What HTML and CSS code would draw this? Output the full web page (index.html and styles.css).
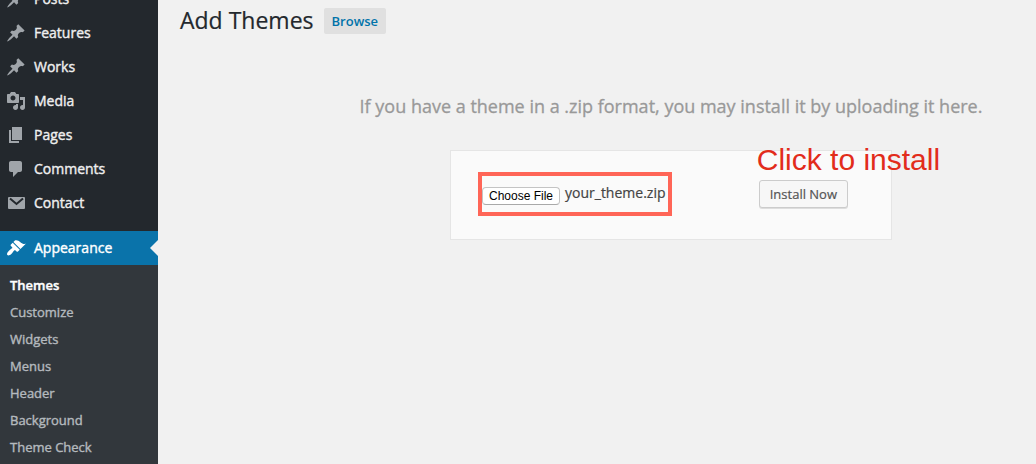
FILE: index.html
```html
<!DOCTYPE html>
<html lang="en">
<head>
<meta charset="utf-8">
<title>Add Themes</title>
<link rel="stylesheet" href="styles.css">
</head>
<body>
<svg class="sprite" aria-hidden="true">
  <symbol id="pin" viewBox="0 0 20 20"><path d="M10.44 3.02l1.82-1.82 6.36 6.35-1.83 1.82c-1.05-.68-2.48-.57-3.41.36l-.75.75c-.92.93-1.04 2.35-.35 3.41l-1.83 1.82-2.41-2.41-2.8 2.79c-.42.42-3.38 2.71-3.8 2.29s1.86-3.39 2.28-3.81l2.79-2.79L4.1 9.36l1.83-1.82c1.05.69 2.48.57 3.4-.36l.75-.75c.93-.92 1.05-2.35.36-3.41z"/></symbol>
</svg>
<div class="layout">
  <nav class="sidebar" aria-label="Main menu">
    <ul class="menu">
      <li><a class="menu-link" href="#"><svg class="icon"><use href="#pin"/></svg><span class="menu-label">Posts</span></a></li>
      <li><a class="menu-link" href="#"><svg class="icon"><use href="#pin"/></svg><span class="menu-label">Features</span></a></li>
      <li><a class="menu-link" href="#"><svg class="icon"><use href="#pin"/></svg><span class="menu-label">Works</span></a></li>
      <li><a class="menu-link" href="#"><svg class="icon" viewBox="0 0 20 20"><path d="M13 11V4c0-.55-.45-1-1-1h-1.67L9 1H5L3.67 3H2c-.55 0-1 .45-1 1v7c0 .55.45 1 1 1h10c.55 0 1-.45 1-1zM7 4.5c1.38 0 2.5 1.12 2.5 2.5S8.380 9.500 7 9.500 4.500 8.380 4.500 7 5.620 4.500 7 4.500zM14 6h5v10.500c0 1.380-1.120 2.500-2.500 2.500S14 17.880 14 16.500s1.120-2.500 2.500-2.500c.17 0 .34.020.5.050V9h-3V6zm-4 8.050V13h2v3.500c0 1.380-1.120 2.500-2.500 2.500S7 17.880 7 16.500 8.120 14 9.500 14c.17 0 .34.020.5.050z"/></svg><span class="menu-label">Media</span></a></li>
      <li><a class="menu-link" href="#"><svg class="icon" viewBox="0 0 20 20"><path d="M6 15V2h10v13H6zm-1 1h8v2H3V5h2v11z"/></svg><span class="menu-label">Pages</span></a></li>
      <li><a class="menu-link" href="#"><svg class="icon" viewBox="0 0 20 20"><path d="M5 2h9c1.100 0 2 .9 2 2v7c0 1.100-.9 2-2 2h-2l-5 5v-5H5c-1.100 0-2-.9-2-2V4c0-1.100.9-2 2-2z"/></svg><span class="menu-label">Comments</span></a></li>
      <li><a class="menu-link" href="#"><svg class="icon" viewBox="0 0 20 20"><rect x="2" y="4" width="17" height="12" rx="1"/><path class="envelope-fold" d="M4 5.500l6.500 5.500L17 5.500"/></svg><span class="menu-label">Contact</span></a></li>
      <li class="menu-current">
        <a class="menu-link menu-link-active" href="#"><svg class="icon" viewBox="0 0 20 20"><path d="M14.48 11.060L7.410 3.990l1.500-1.500c.5-.56 2.300-.47 3.510.32 1.210.8 1.430 1.280 2.910 2.100 1.180.64 2.450 1.260 4.450.85zm-.71.71L6.700 4.700 4.930 6.470c-.39.39-.39 1.020 0 1.410l1.060 1.060c.39.39.39 1.030 0 1.420-.6.6-1.430 1.110-2.210 1.690-.35.26-.7.53-1.010.84C1.430 14.230.4 16.080 1.400 17.070c.99 1 2.840-.03 4.180-1.360.31-.31.58-.66.85-1.020.57-.78 1.080-1.610 1.690-2.210.39-.39 1.020-.39 1.410 0l1.060 1.060c.39.39 1.020.39 1.410 0z"/></svg><span class="menu-label">Appearance</span></a>
        <ul class="submenu">
          <li><a class="submenu-link submenu-link-active" href="#">Themes</a></li>
          <li><a class="submenu-link" href="#">Customize</a></li>
          <li><a class="submenu-link" href="#">Widgets</a></li>
          <li><a class="submenu-link" href="#">Menus</a></li>
          <li><a class="submenu-link" href="#">Header</a></li>
          <li><a class="submenu-link" href="#">Background</a></li>
          <li><a class="submenu-link" href="#">Theme Check</a></li>
        </ul>
      </li>
    </ul>
  </nav>
  <main class="content">
    <header class="page-head">
      <h1 class="page-title">Add Themes</h1>
      <a class="browse" href="#">Browse</a>
    </header>
    <section class="upload">
      <p class="upload-help">If you have a theme in a .zip format, you may install it by uploading it here.</p>
      <form class="upload-form">
        <div class="file-field">
          <input class="file-input" id="theme-file" type="file" accept=".zip">
          <label class="file-name" for="theme-file">your_theme.zip</label>
        </div>
        <div class="install">
          <span class="install-note">Click to install</span>
          <button class="install-button" type="button">Install Now</button>
        </div>
      </form>
    </section>
  </main>
</div>
</body>
</html>
```
FILE: styles.css
```css
* {
  box-sizing: border-box;
}

body {
  margin: 0;
  background: #f1f1f1;
  color: #444;
  font-family: "Open Sans", sans-serif;
  font-size: 14px;
}

a {
  text-decoration: none;
}

ul {
  margin: 0;
  padding: 0;
  list-style: none;
}

.sprite {
  display: none;
}

.layout {
  display: flex;
  height: 100vh;
  overflow: hidden;
}

/* Sidebar, scrolled part of the way down */
.sidebar {
  flex: 0 0 158px;
  background: #23282d;
}

.menu {
  margin-top: -18px;
}

.menu-link {
  display: flex;
  align-items: center;
  gap: 8px;
  height: 34px;
  padding-left: 6px;
  color: #eee;
  -webkit-text-stroke: 0.4px;
}

.menu-label {
  padding-bottom: 2px;
}

.icon {
  flex: none;
  width: 20px;
  height: 20px;
  fill: #a0a5aa;
}

.envelope-fold {
  fill: none;
  stroke: #23282d;
  stroke-width: 2;
}

.menu-current {
  margin-top: 11px;
}

.menu-link-active {
  position: relative;
  background: #0a73aa;
  color: #fff;
}

.menu-link-active .icon {
  fill: #fff;
}

.menu-link-active::after {
  content: "";
  position: absolute;
  top: 9px;
  right: 0;
  border: 8px solid transparent;
  border-left-width: 0;
  border-right-color: #f1f1f1;
}

.submenu {
  padding: 7px 0;
  background: #32373c;
}

.submenu-link {
  display: block;
  padding-left: 10px;
  color: #b4b9be;
  font-size: 13px;
  line-height: 27px;
  -webkit-text-stroke: 0.4px;
}

.submenu-link-active {
  color: #fff;
  font-weight: 600;
}

/* Page */
.content {
  flex: 1;
  min-width: 0;
}

.page-head {
  display: flex;
  align-items: center;
  gap: 10px;
  height: 42px;
  padding-left: 22px;
}

.page-title {
  margin: 0;
  padding-bottom: 2px;
  color: #23282d;
  font-size: 23px;
  font-weight: 400;
  -webkit-text-stroke: 0.2px;
}

.browse {
  padding: 0 8px;
  border-radius: 2px;
  background: #e0e0e0;
  color: #0073aa;
  font-size: 13px;
  font-weight: 600;
  line-height: 26px;
}

.upload {
  display: flex;
  flex-direction: column;
  align-items: center;
  padding: 52px 0 0 148px;
}

.upload-help {
  margin: 0 0 32px;
  color: #999;
  font-size: 18px;
  line-height: 24px;
  white-space: nowrap;
  -webkit-text-stroke: 0.3px;
}

.upload-form {
  display: flex;
  align-items: center;
  justify-content: space-between;
  width: 442px;
  padding: 21px 43px 23px 27px;
  border: 1px solid #e5e5e5;
  background: #fafafa;
}

.file-field {
  display: flex;
  align-items: flex-start;
  gap: 5px;
  height: 44px;
  padding: 7px 3px 0 0;
  border: 4px solid #ff6557;
}

.file-input {
  width: 78px;
  margin-top: 4px;
  overflow: hidden;
  font-size: 12px;
}

.file-input::file-selector-button {
  width: 78px;
  height: 18px;
  margin: 0;
  padding: 0;
  border: 1px solid #c4c4c4;
  border-bottom-color: #a9a9a9;
  border-radius: 4px;
  background: #fff;
  color: #000;
  font-family: "Liberation Sans", sans-serif;
  font-size: 12px;
}

.file-name {
  line-height: 20px;
  -webkit-text-stroke: 0.2px;
}

.install {
  position: relative;
}

.install-note {
  position: absolute;
  bottom: 100%;
  left: -2px;
  color: #e22c1b;
  font-family: "Liberation Sans", sans-serif;
  font-size: 30px;
  line-height: 40px;
  white-space: nowrap;
}

.install-button {
  height: 28px;
  padding: 0 10px;
  border: 1px solid #ccc;
  border-radius: 3px;
  background: #f7f7f7;
  box-shadow: 0 1px 0 #ddd;
  color: #555;
  font-family: inherit;
  font-size: 13px;
  -webkit-text-stroke: 0.2px;
}
```
